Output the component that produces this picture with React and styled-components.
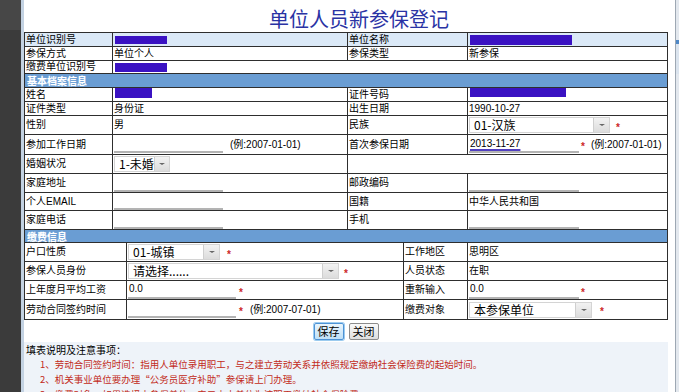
import React from 'react';
import styled, { createGlobalStyle } from 'styled-components';

const GlobalStyle = createGlobalStyle`
  html, body {
    margin: 0;
    padding: 0;
    background: #fff;
    overflow: hidden;
  }
  body {
    font-family: "Liberation Sans", "Noto Sans CJK SC", sans-serif;
    font-size: 10px;
    color: #000;
  }
`;

const Page = styled.div`
  display: flex;
  width: 679px;
  height: 392px;
  overflow: hidden;
`;

const LeftRail = styled.div`
  width: 21px;
  flex-shrink: 0;
  background: linear-gradient(#474747 0, #474747 30px, #3b3b3b 30px);
`;

const RailEdge = styled.div`
  width: 3px;
  flex-shrink: 0;
  background: #c3d2e2;
`;

const Main = styled.div`
  width: 651px;
  flex-shrink: 0;
  background: #fff;
  display: flex;
  flex-direction: column;
  overflow: hidden;
`;

const RightRail = styled.div`
  flex: 1;
  border-left: 1px solid #9ea8b3;
  background: linear-gradient(#e3e8ee 0, #e3e8ee 40px, #4f88c6 40px, #4f88c6 44px, #dbe4ee 44px, #dbe4ee 74px, #e3e8ee 74px);
`;

const Title = styled.h1`
  margin: 0;
  flex-shrink: 0;
  width: 644px;
  height: 32px;
  box-sizing: border-box;
  padding: 8px 0 0 26px;
  text-align: center;
  font-family: "Noto Sans CJK SC", sans-serif;
  font-weight: 400;
  font-size: 20px;
  line-height: 22px;
  color: #2a33a4;
`;

const Grid = styled.div`
  display: grid;
  flex-shrink: 0;
  width: 644px;
  box-sizing: border-box;
  grid-template-columns: ${p => p.$cols};
  grid-template-rows: ${p => p.$rows};
  border-left: 1px solid #2e2e2e;
  border-top: ${p => (p.$top ? '1px solid #2e2e2e' : 'none')};
`;

const Cell = styled.div`
  grid-column: span ${p => p.$span || 1};
  box-sizing: border-box;
  border-right: 1px solid #2e2e2e;
  border-bottom: 1px solid #2e2e2e;
  background: ${p => p.$bg || '#fff'};
  display: flex;
  align-items: ${p => p.$align || 'center'};
  padding-left: 1px;
  white-space: nowrap;
  overflow: hidden;
  line-height: 12px;
`;

const Section = styled.div`
  grid-column: 1 / -1;
  box-sizing: border-box;
  border-right: 1px solid #2e2e2e;
  border-bottom: 1px solid #2e2e2e;
  background: #6a9dd3;
  color: #fff;
  font-weight: 700;
  font-size: 10px;
  padding-left: 2px;
  display: flex;
  align-items: center;
  text-shadow: 0 0 1px #9cc0e6;
`;

const Redact = styled.span`
  display: inline-block;
  width: ${p => p.$w}px;
  height: ${p => p.$h}px;
  margin-left: 1px;
  background: #3a12c2;
`;

const Field = styled.div`
  width: ${p => p.$w}px;
  height: 17px;
  box-sizing: border-box;
  border-bottom: 2px solid #b3b3b3;
  display: flex;
  align-items: center;
  padding-left: 1px;
  font-size: 10px;
`;

const DateText = styled.span`
  text-decoration: underline;
  text-decoration-color: #5140c0;
  text-decoration-thickness: 2px;
  text-underline-offset: 2px;
  padding-right: 4px;
`;

const SelectBox = styled.div`
  width: ${p => p.$w}px;
  height: 16px;
  box-sizing: border-box;
  border: 1px solid #d4d4d4;
  background: #fff;
  display: flex;
  align-items: center;
  justify-content: space-between;
  padding-left: 4px;
  font-family: "Noto Sans CJK SC", sans-serif;
  font-size: 12px;
  line-height: 14px;
`;

const DropBtn = styled.span`
  width: 15px;
  height: 14px;
  background: linear-gradient(#f2f2f2, #dcdcdc);
  border-left: 1px solid #cfcfcf;
  display: flex;
  align-items: center;
  justify-content: center;

  &::after {
    content: '';
    border-left: 3px solid transparent;
    border-right: 3px solid transparent;
    border-top: 2px solid #666;
  }
`;

const Star = styled.span`
  margin-left: ${p => p.$ml}px;
  padding-top: 5px;
  color: #cc2626;
  font-size: 10px;
  font-weight: 700;
`;

const Hint = styled.span`
  margin-left: ${p => p.$ml}px;
  font-size: 10px;
`;

const ButtonRow = styled.div`
  flex-shrink: 0;
  width: 644px;
  height: 22px;
  display: flex;
  align-items: center;
  justify-content: center;
  gap: 5px;
`;

const Button = styled.button`
  height: 17px;
  padding: 0 3px;
  font-family: "Noto Sans CJK SC", sans-serif;
  font-size: 11px;
  line-height: 13px;
  border-radius: 2px;
  color: #000;
  border: 1px solid ${p => (p.$primary ? '#4d93d6' : '#8c8c8c')};
  background: ${p => (p.$primary ? 'linear-gradient(#e9f5fd, #bfe0f7)' : 'linear-gradient(#fafafa, #dedede)')};
  box-shadow: ${p => (p.$primary ? '0 0 0 1px #9ccbef' : 'none')};
`;

const Notes = styled.div`
  width: 644px;
  flex: 1;
  min-height: 0;
  overflow: hidden;
  background: #eef3f9;
  padding: 0 0 0 2px;
  box-sizing: border-box;
`;

const NoteTitle = styled.div`
  font-family: "Noto Sans CJK SC", sans-serif;
  font-size: 10px;
  line-height: 15px;
`;

const NoteLine = styled.div`
  margin-left: 14px;
  font-family: "Noto Sans CJK SC", sans-serif;
  font-size: 9.5px;
  line-height: 15px;
  color: #c22a20;
  white-space: nowrap;
`;

function Select({ w, children }) {
  return (
    <SelectBox $w={w}>
      <span>{children}</span>
      <DropBtn />
    </SelectBox>
  );
}

const COLS_A = '88px 235px 120px 200px';
const ROWS_A = '14px 14px 13px 14px 14px 14px 19px 20px 19px 19px 18px 19px';
const COLS_B = '102px 277px 64px 200px';
const ROWS_B = '13px 19px 19px 19px 20px';

export default function App() {
  return (
    <Page>
      <GlobalStyle />
      <LeftRail />
      <RailEdge />
      <Main>
        <Title>单位人员新参保登记</Title>

        <Grid $cols={COLS_A} $rows={ROWS_A} $top>
          <Cell $bg="#dbe9f7">单位识别号</Cell>
          <Cell $bg="#dbe9f7"><Redact $w={52} $h={8} /></Cell>
          <Cell $bg="#dbe9f7">单位名称</Cell>
          <Cell $bg="#dbe9f7"><Redact $w={102} $h={10} /></Cell>

          <Cell>参保方式</Cell>
          <Cell>单位个人</Cell>
          <Cell>参保类型</Cell>
          <Cell>新参保</Cell>

          <Cell>缴费单位识别号</Cell>
          <Cell $span={3}><Redact $w={52} $h={9} /></Cell>

          <Section>基本档案信息</Section>

          <Cell>姓名</Cell>
          <Cell $align="flex-start"><Redact $w={37} $h={10} /></Cell>
          <Cell>证件号码</Cell>
          <Cell $align="flex-start"><Redact $w={96} $h={9} /></Cell>

          <Cell>证件类型</Cell>
          <Cell>身份证</Cell>
          <Cell>出生日期</Cell>
          <Cell>1990-10-27</Cell>

          <Cell>性别</Cell>
          <Cell>男</Cell>
          <Cell>民族</Cell>
          <Cell>
            <Select w={141}>01-汉族</Select>
            <Star $ml={6}>*</Star>
          </Cell>

          <Cell>参加工作日期</Cell>
          <Cell>
            <Field $w={109} />
            <Hint $ml={7}>(例:2007-01-01)</Hint>
          </Cell>
          <Cell>首次参保日期</Cell>
          <Cell>
            <Field $w={110}><DateText>2013-11-27</DateText></Field>
            <Star $ml={2}>*</Star>
            <Hint $ml={6}>(例:2007-01-01)</Hint>
          </Cell>

          <Cell>婚姻状况</Cell>
          <Cell><Select w={56}>1-未婚</Select></Cell>
          <Cell $span={2} />

          <Cell>家庭地址</Cell>
          <Cell><Field $w={109} /></Cell>
          <Cell>邮政编码</Cell>
          <Cell><Field $w={110} /></Cell>

          <Cell>个人EMAIL</Cell>
          <Cell><Field $w={109} /></Cell>
          <Cell>国籍</Cell>
          <Cell>中华人民共和国</Cell>

          <Cell>家庭电话</Cell>
          <Cell><Field $w={109} /></Cell>
          <Cell>手机</Cell>
          <Cell><Field $w={110} /></Cell>
        </Grid>

        <Grid $cols={COLS_B} $rows={ROWS_B}>
          <Section>缴费信息</Section>

          <Cell>户口性质</Cell>
          <Cell>
            <Select w={92}>01-城镇</Select>
            <Star $ml={7}>*</Star>
          </Cell>
          <Cell>工作地区</Cell>
          <Cell>思明区</Cell>

          <Cell>参保人员身份</Cell>
          <Cell>
            <Select w={211}>请选择......</Select>
            <Star $ml={5}>*</Star>
          </Cell>
          <Cell>人员状态</Cell>
          <Cell>在职</Cell>

          <Cell>上年度月平均工资</Cell>
          <Cell>
            <Field $w={108}>0.0</Field>
            <Star $ml={3}>*</Star>
          </Cell>
          <Cell>重新输入</Cell>
          <Cell>
            <Field $w={110}>0.0</Field>
            <Star $ml={2}>*</Star>
          </Cell>

          <Cell>劳动合同签约时间</Cell>
          <Cell>
            <Field $w={108} />
            <Star $ml={3}>*</Star>
            <Hint $ml={7}>(例:2007-07-01)</Hint>
          </Cell>
          <Cell>缴费对象</Cell>
          <Cell>
            <Select w={123}>本参保单位</Select>
            <Star $ml={8}>*</Star>
          </Cell>
        </Grid>

        <ButtonRow>
          <Button $primary>保存</Button>
          <Button>关闭</Button>
        </ButtonRow>

        <Notes>
          <NoteTitle>填表说明及注意事项：</NoteTitle>
          <NoteLine>1、劳动合同签约时间：指用人单位录用职工，与之建立劳动关系并依照规定缴纳社会保险费的起始时间。</NoteLine>
          <NoteLine>2、机关事业单位要办理“公务员医疗补助”参保请上门办理。</NoteLine>
          <NoteLine>3、缴费对象：如果选择本参保单位，表示由本单位为该职工缴纳社会保险费。</NoteLine>
        </Notes>
      </Main>
      <RightRail />
    </Page>
  );
}
